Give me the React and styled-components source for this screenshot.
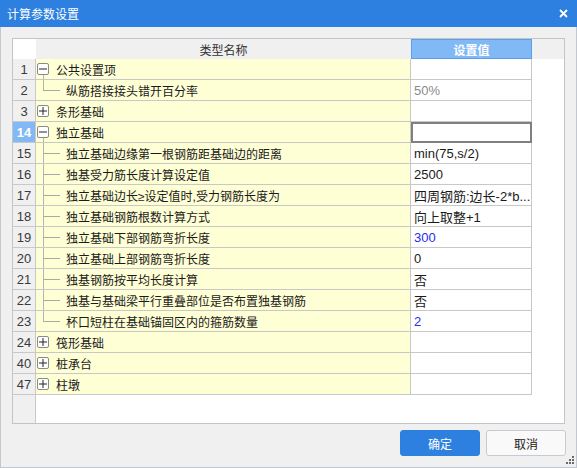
import React from 'react';
import styled, { createGlobalStyle, css } from 'styled-components';

const GlobalStyle = createGlobalStyle`
  html, body {
    margin: 0;
    padding: 0;
    background: #ffffff;
  }
  * {
    box-sizing: border-box;
  }
`;

const rows = [
  { n: 1, kind: 'group', open: true, name: '公共设置项', value: '' },
  { n: 2, kind: 'child', last: true, name: '纵筋搭接接头错开百分率', value: '50%', tone: 'muted' },
  { n: 3, kind: 'group', open: false, name: '条形基础', value: '' },
  { n: 14, kind: 'group', open: true, name: '独立基础', value: '', selected: true },
  { n: 15, kind: 'child', name: '独立基础边缘第一根钢筋距基础边的距离', value: 'min(75,s/2)' },
  { n: 16, kind: 'child', name: '独基受力筋长度计算设定值', value: '2500' },
  { n: 17, kind: 'child', name: '独立基础边长≥设定值时,受力钢筋长度为', value: '四周钢筋:边长-2*b...' },
  { n: 18, kind: 'child', name: '独立基础钢筋根数计算方式', value: '向上取整+1' },
  { n: 19, kind: 'child', name: '独立基础下部钢筋弯折长度', value: '300', tone: 'blue' },
  { n: 20, kind: 'child', name: '独立基础上部钢筋弯折长度', value: '0' },
  { n: 21, kind: 'child', name: '独基钢筋按平均长度计算', value: '否' },
  { n: 22, kind: 'child', name: '独基与基础梁平行重叠部位是否布置独基钢筋', value: '否' },
  { n: 23, kind: 'child', last: true, name: '杯口短柱在基础锚固区内的箍筋数量', value: '2', tone: 'blue' },
  { n: 24, kind: 'group', open: false, name: '筏形基础', value: '' },
  { n: 40, kind: 'group', open: false, name: '桩承台', value: '' },
  { n: 47, kind: 'group', open: false, name: '柱墩', value: '' },
];

const App = () => (
  <>
    <GlobalStyle />
    <Window>
      <TitleBar>
        <Title>计算参数设置</Title>
        <CloseButton aria-label="关闭">
          <svg width="9" height="9" viewBox="0 0 9 9">
            <path d="M1 1L8 8M8 1L1 8" stroke="#ffffff" strokeWidth="1.8" />
          </svg>
        </CloseButton>
      </TitleBar>

      <Body>
        <Grid>
          <HeaderRow>
            <CornerCell />
            <HeaderCell>类型名称</HeaderCell>
            <HeaderCell $active>设置值</HeaderCell>
            <HeaderCell />
          </HeaderRow>

          {rows.map((row) => (
            <Row key={row.n}>
              <NumCell $selected={row.selected}>{row.n}</NumCell>
              <NameCell>
                {row.kind === 'group' ? (
                  <>
                    <ToggleBox $open={row.open}>
                      <svg width="8" height="8" viewBox="0 0 8 8">
                        <path d="M0 4H8" stroke="#222" strokeWidth="1" />
                        {!row.open && <path d="M4 0V8" stroke="#222" strokeWidth="1" />}
                      </svg>
                    </ToggleBox>
                    <GroupName>{row.name}</GroupName>
                  </>
                ) : (
                  <>
                    <Connector $last={row.last} />
                    <ChildName>{row.name}</ChildName>
                  </>
                )}
              </NameCell>
              <ValueCell $tone={row.tone} $focused={row.selected}>
                {row.value}
              </ValueCell>
              <BlankCell />
            </Row>
          ))}

          <Filler>
            <FillerNum />
            <div />
          </Filler>
        </Grid>

        <Footer>
          <Button $primary>确定</Button>
          <Button>取消</Button>
        </Footer>

        <Grip width="9" height="9" viewBox="0 0 9 9">
          <rect x="7" y="1" width="2" height="2" fill="#6a6a6a" />
          <rect x="4" y="4" width="2" height="2" fill="#6a6a6a" />
          <rect x="7" y="4" width="2" height="2" fill="#6a6a6a" />
          <rect x="1" y="7" width="2" height="2" fill="#6a6a6a" />
          <rect x="4" y="7" width="2" height="2" fill="#6a6a6a" />
          <rect x="7" y="7" width="2" height="2" fill="#6a6a6a" />
        </Grip>
      </Body>
    </Window>
  </>
);

const Window = styled.div`
  width: 577px;
  height: 468px;
  display: flex;
  flex-direction: column;
  font-family: 'Liberation Sans', 'Noto Sans CJK SC', sans-serif;
  color: #1a1a1a;
`;

const TitleBar = styled.div`
  height: 27px;
  flex-shrink: 0;
  background: #2d7fe0;
  display: flex;
  align-items: center;
  justify-content: space-between;
  padding: 0 9px 0 7px;
`;

const Title = styled.div`
  color: #ffffff;
  font-size: 12px;
  font-family: 'Noto Sans CJK SC', sans-serif;
`;

const CloseButton = styled.div`
  width: 9px;
  height: 9px;
  display: flex;
  margin-top: -1px;
`;

const Body = styled.div`
  position: relative;
  flex: 1;
  display: flex;
  flex-direction: column;
  background: #f0f0f0;
  border: 1px solid #c3c7cf;
  border-top: none;
  padding: 11px 11px 11px 11px;
`;

const Grid = styled.div`
  height: 386px;
  display: flex;
  flex-direction: column;
  border: 1px solid #c4c4c8;
  background: #ffffff;
`;

const columns = css`
  display: grid;
  grid-template-columns: 23px 375px 121px 1fr;
`;

const HeaderRow = styled.div`
  ${columns};
  height: 20px;
  flex-shrink: 0;
  background: #f0f0f0;
`;

const CornerCell = styled.div`
  background: #ffffff;
`;

const HeaderCell = styled.div`
  display: flex;
  align-items: center;
  justify-content: center;
  font-size: 12px;
  font-family: 'Noto Sans CJK SC', sans-serif;
  color: #333;
  ${({ $active }) =>
    $active &&
    css`
      background: #80b9f6;
      border: 1px solid #5c9fe9;
      color: #ffffff;
      font-weight: 700;
    `}
`;

const Row = styled.div`
  ${columns};
  height: 21px;
  flex-shrink: 0;
`;

const cellLine = css`
  border-bottom: 1px solid #c8c8c8;
  border-right: 1px solid #c8c8c8;
`;

const NumCell = styled.div`
  ${cellLine};
  display: flex;
  align-items: center;
  justify-content: center;
  font-size: 13px;
  color: #3a3a3a;
  background: ${({ $selected }) => ($selected ? '#80b9f6' : '#f0f0f0')};
  ${({ $selected }) =>
    $selected &&
    css`
      color: #ffffff;
      font-weight: 700;
    `}
`;

const NameCell = styled.div`
  ${cellLine};
  display: flex;
  align-items: center;
  background: #ffffd6;
  font-size: 12px;
  overflow: hidden;
  white-space: nowrap;
`;

const ToggleBox = styled.div`
  position: relative;
  width: 12px;
  height: 12px;
  margin-left: 1px;
  flex-shrink: 0;
  border: 1px solid #8a8a8a;
  border-radius: 2px;
  background: #ffffff;
  display: flex;
  align-items: center;
  justify-content: center;

  ${({ $open }) =>
    $open &&
    css`
      &::after {
        content: '';
        position: absolute;
        left: 5px;
        top: 11px;
        width: 1px;
        height: 6px;
        background: #b4b4b4;
      }
    `}
`;

const GroupName = styled.span`
  margin-left: 7px;
`;

const Connector = styled.span`
  position: relative;
  align-self: stretch;
  width: 17px;
  margin-left: 7px;
  flex-shrink: 0;

  &::before {
    content: '';
    position: absolute;
    left: 0;
    top: 0;
    width: 1px;
    height: ${({ $last }) => ($last ? '50%' : '100%')};
    background: #b4b4b4;
  }

  &::after {
    content: '';
    position: absolute;
    left: 0;
    right: 0;
    top: 50%;
    height: 1px;
    background: #a8a8a8;
  }
`;

const ChildName = styled.span`
  margin-left: 6px;
`;

const toneColor = {
  muted: '#8a8a8a',
  blue: '#2a2af0',
};

const ValueCell = styled.div`
  ${cellLine};
  display: flex;
  align-items: center;
  padding-left: 3px;
  font-size: 13px;
  white-space: nowrap;
  overflow: hidden;
  color: ${({ $tone }) => toneColor[$tone] || '#1a1a1a'};
  ${({ $focused }) =>
    $focused &&
    css`
      outline: 2px solid #808080;
      outline-offset: -2px;
    `}
`;

const BlankCell = styled.div``;

const Filler = styled.div`
  flex: 1;
  display: grid;
  grid-template-columns: 23px 1fr;
`;

const FillerNum = styled.div`
  background: #f0f0f0;
  border-right: 1px solid #c8c8c8;
`;

const Footer = styled.div`
  display: flex;
  justify-content: flex-end;
  gap: 6px;
  margin-top: 6px;
  margin-right: -1px;
`;

const Button = styled.button`
  width: 80px;
  height: 26px;
  border-radius: 3px;
  font-size: 12px;
  font-family: 'Noto Sans CJK SC', sans-serif;
  padding: 0;
  cursor: pointer;
  border: 1px solid ${({ $primary }) => ($primary ? '#2d7fe0' : '#c4cbd5')};
  background: ${({ $primary }) => ($primary ? '#2d7fe0' : '#f9f9f9')};
  color: ${({ $primary }) => ($primary ? '#ffffff' : '#222222')};
`;

const Grip = styled.svg`
  position: absolute;
  right: 2px;
  bottom: 3px;
`;

export default App;
